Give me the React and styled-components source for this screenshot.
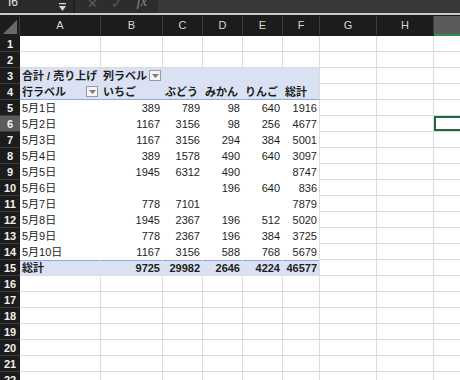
import React from 'react';
import styled, { createGlobalStyle } from 'styled-components';

const GlobalStyle = createGlobalStyle`
  html, body {
    margin: 0;
    padding: 0;
    background: #ffffff;
    overflow: hidden;
  }
  body {
    font-family: "Liberation Sans", "Noto Sans CJK JP", sans-serif;
  }
`;

const columns = ['A', 'B', 'C', 'D', 'E', 'F', 'G', 'H', 'I'];
const widths = [81, 62, 40, 40, 40, 37, 57, 57, 60];

const fruits = ['いちご', 'ぶどう', 'みかん', 'りんご', '総計'];

const rows = [
  ['5月1日', 389, 789, 98, 640, 1916],
  ['5月2日', 1167, 3156, 98, 256, 4677],
  ['5月3日', 1167, 3156, 294, 384, 5001],
  ['5月4日', 389, 1578, 490, 640, 3097],
  ['5月5日', 1945, 6312, 490, '', 8747],
  ['5月6日', '', '', 196, 640, 836],
  ['5月7日', 778, 7101, '', '', 7879],
  ['5月8日', 1945, 2367, 196, 512, 5020],
  ['5月9日', 778, 2367, 196, 384, 3725],
  ['5月10日', 1167, 3156, 588, 768, 5679],
];

const totals = ['総計', 9725, 29982, 2646, 4224, 46577];

function DropButton() {
  return (
    <Drop>
      <svg width="7" height="4" viewBox="0 0 7 4">
        <path d="M0 0 L7 0 L3.5 4 Z" fill="#7a7a7a" />
      </svg>
    </Drop>
  );
}

function buildRow(r) {
  // returns 9 cell descriptors for row number r (1-based)
  const cells = columns.map(() => ({ text: '' }));
  if (r === 3) {
    cells[0] = { text: '合計 / 売り上げ', bold: true, kind: 'head' };
    cells[1] = { text: '列ラベル', bold: true, kind: 'head', drop: true };
    for (let i = 2; i < 6; i++) cells[i] = { text: '', kind: 'head' };
  } else if (r === 4) {
    cells[0] = { text: '行ラベル', bold: true, kind: 'sub', drop: true };
    fruits.forEach((f, i) => {
      cells[i + 1] = { text: f, bold: true, kind: 'sub' };
    });
  } else if (r >= 5 && r <= 14) {
    const d = rows[r - 5];
    d.forEach((v, i) => {
      cells[i] = { text: v, kind: 'body', num: i > 0 };
    });
  } else if (r === 15) {
    totals.forEach((v, i) => {
      cells[i] = { text: v, kind: 'total', bold: true, num: i > 0 };
    });
  }
  if (r === 6) cells[8] = { ...cells[8], selected: true };
  return cells;
}

function App() {
  const rowNumbers = Array.from({ length: 22 }, (_, i) => i + 1);

  return (
    <>
      <GlobalStyle />
      <Toolbar>
        <NameBox>
          <span>I6</span>
          <NameArrow>
            <svg width="7" height="8" viewBox="0 0 7 8">
              <rect x="0" y="0" width="7" height="1.3" fill="#d8d8d8" />
              <path d="M0 3 L7 3 L3.5 8 Z" fill="#d8d8d8" />
            </svg>
          </NameArrow>
        </NameBox>
        <FormulaIcons>
          <IconGlyph>✕</IconGlyph>
          <IconGlyph>✓</IconGlyph>
          <Fx>fx</Fx>
        </FormulaIcons>
        <FormulaInput />
      </Toolbar>
      <Divider />
      <Sheet $widths={widths}>
        <Corner>
          <svg width="14" height="14" viewBox="0 0 14 14">
            <path d="M14 0 L14 14 L0 14 Z" fill="#6a6a6a" />
          </svg>
        </Corner>
        {columns.map((c) => (
          <ColHead key={c} $active={c === 'I'}>
            {c}
          </ColHead>
        ))}
        {rowNumbers.map((r) => (
          <React.Fragment key={r}>
            <RowHead $active={r === 6}>{r}</RowHead>
            {buildRow(r).map((cell, i) => (
              <Cell
                key={i}
                $kind={cell.kind}
                $bold={cell.bold}
                $num={cell.num}
                $selected={cell.selected}
                $last={i === 5}
              >
                <CellText>{cell.text}</CellText>
                {cell.drop && <DropButton />}
              </Cell>
            ))}
          </React.Fragment>
        ))}
      </Sheet>
    </>
  );
}

export default App;

const Toolbar = styled.div`
  display: flex;
  height: 13px;
  background: #2d2d2d;
  overflow: hidden;
`;

const NameBox = styled.div`
  width: 75px;
  display: flex;
  align-items: flex-end;
  justify-content: space-between;
  padding: 0 7px 0 8px;
  box-sizing: border-box;
  background: #2a2a2a;
  border-right: 2px solid #1f1f1f;
  color: #e6e6e6;
  font-size: 12px;
  line-height: 12px;

  span {
    margin-bottom: 5px;
  }
`;

const NameArrow = styled.div`
  display: flex;
  align-items: flex-end;
  height: 100%;
  padding-bottom: 2px;
  box-sizing: border-box;
`;

const FormulaIcons = styled.div`
  display: flex;
  align-items: flex-end;
  gap: 13px;
  padding-left: 12px;
  width: 83px;
  box-sizing: border-box;
`;

const IconGlyph = styled.span`
  color: #5e5e5e;
  font-family: "DejaVu Sans", sans-serif;
  font-size: 13px;
  line-height: 13px;
  margin-bottom: 3px;
`;

const Fx = styled.span`
  color: #8a8a8a;
  font-family: "Liberation Serif", serif;
  font-style: italic;
  font-size: 14px;
  line-height: 14px;
  margin-bottom: 4px;
  margin-left: 2px;
`;

const FormulaInput = styled.div`
  flex: 1;
  background: #383838;
`;

const Divider = styled.div`
  height: 3px;
  background: #c9c9c9;
  border-bottom: 1px solid #1a1a1a;
  box-sizing: border-box;
`;

const Sheet = styled.div`
  display: grid;
  grid-template-columns: 20px ${(p) => p.$widths.map((w) => `${w}px`).join(' ')};
  grid-template-rows: 20px;
  grid-auto-rows: 16px;
`;

const Corner = styled.div`
  background: #1c1c1c;
  border-right: 1px solid #3a3a3a;
  display: flex;
  align-items: flex-end;
  justify-content: flex-end;
  padding: 0 2px 2px 0;
  box-sizing: border-box;
`;

const ColHead = styled.div`
  background: ${(p) => (p.$active ? '#5b5b5b' : '#1c1c1c')};
  border-right: 1px solid #3e3e3e;
  border-bottom: 2px solid ${(p) => (p.$active ? '#2f8a55' : '#1c1c1c')};
  box-sizing: border-box;
  color: #d6d6d6;
  font-size: 11px;
  display: flex;
  align-items: center;
  justify-content: center;
`;

const RowHead = styled.div`
  background: ${(p) => (p.$active ? '#5b5b5b' : '#1c1c1c')};
  border-bottom: 1px solid #3a3a3a;
  box-sizing: border-box;
  color: #f0f0f0;
  font-size: 11px;
  font-weight: bold;
  display: flex;
  align-items: center;
  justify-content: center;
`;

const pivotBg = {
  head: '#d9e1f2',
  sub: '#d9e1f2',
  total: '#d9e1f2',
  body: '#ffffff',
};

const Cell = styled.div`
  position: relative;
  display: flex;
  align-items: center;
  justify-content: ${(p) => (p.$num ? 'flex-end' : 'space-between')};
  gap: 2px;
  padding: 0 2px 0 2px;
  box-sizing: border-box;
  overflow: hidden;
  white-space: nowrap;
  font-size: 11px;
  color: #1e1e1e;
  font-weight: ${(p) => (p.$bold ? 'bold' : 'normal')};
  background: ${(p) => (p.$kind ? pivotBg[p.$kind] : '#ffffff')};
  border-right: 1px solid
    ${(p) => (p.$kind && !p.$last ? 'transparent' : '#dcdcdc')};
  border-bottom: 1px solid
    ${(p) => {
      if (p.$kind === 'sub') return '#8ea9db';
      if (p.$kind === 'head') return 'transparent';
      if (p.$kind === 'body') return 'transparent';
      if (p.$kind === 'total') return '#dcdcdc';
      return '#dcdcdc';
    }};
  box-shadow: ${(p) => {
    if (p.$selected) return 'inset 0 0 0 2px #1e6b41';
    if (p.$kind === 'total') return 'inset 0 1px 0 #8ea9db';
    return 'none';
  }};
`;

const CellText = styled.span`
  line-height: 16px;
`;

const Drop = styled.div`
  width: 12px;
  height: 11px;
  flex: none;
  border: 1px solid #9a9a9a;
  background: #f4f4f4;
  box-sizing: border-box;
  display: flex;
  align-items: center;
  justify-content: center;
`;
